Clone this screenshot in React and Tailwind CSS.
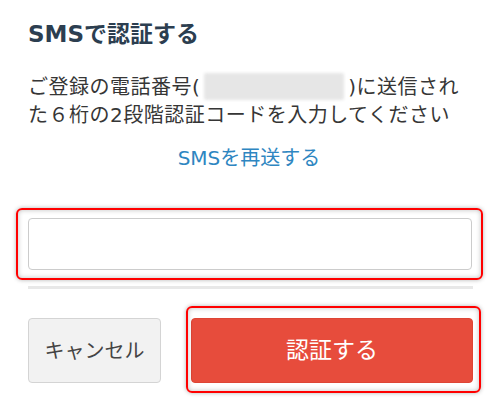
export default function App() {
  const font = { fontFamily: '"DejaVu Sans", "Noto Sans CJK JP", sans-serif' };
  return (
    <div className="w-[498px] h-[413px] bg-white overflow-hidden" style={font}>
      <div className="pl-[28px] w-[473px] flex flex-col">
        <h1 className="mt-[19px] text-[23px] leading-[30px] font-bold text-[#2c3e50]">
          SMSで認証する
        </h1>
        <p className="mt-[24px] text-[20px] leading-[28px] tracking-[0.5px] text-[#363636] whitespace-nowrap">
          ご登録の電話番号(
          <span className="inline-block align-middle w-[140px] h-[27px] mx-[4px] -mt-[4px] bg-[#e6e6e6] blur-[1.5px] rounded-[2px]"></span>
          )に送信され
          <br />
          た６桁の2段階認証コードを入力してください
        </p>
        <div className="mt-[15px] text-center text-[20px] leading-[28px] text-[#2e86c1] pr-[3px]">
          SMSを再送する
        </div>
        <div className="relative mt-[46px]">
          <input
            type="text"
            className="block w-[444px] h-[52px] bg-white border border-[#cccccc] rounded-[4px] outline-none"
          />
          <div className="absolute -left-[12px] -right-[10px] -top-[10px] -bottom-[10px] border-2 border-[#ff0000] rounded-[6px] shadow-[0_0_4px_rgba(0,0,0,0.3),inset_0_0_5px_rgba(0,0,0,0.25)] pointer-events-none"></div>
        </div>
        <div className="mt-[16px] w-[445px] h-[3px] bg-[#e8e8e8]"></div>
        <div className="mt-[29px] flex gap-[30px]">
          <button className="w-[133px] h-[65px] bg-[#f2f2f2] border border-[#d4d4d4] rounded-[4px] text-[20px] text-[#444444] flex items-center justify-center">
            キャンセル
          </button>
          <div className="relative">
            <button className="w-[282px] h-[65px] bg-[#e74c3c] border border-[#de4535] rounded-[4px] text-[23px] text-white flex items-center justify-center">
              認証する
            </button>
            <div className="absolute -left-[5px] -right-[8px] -top-[12px] -bottom-[10px] border-2 border-[#ff0000] rounded-[6px] shadow-[0_0_4px_rgba(0,0,0,0.3),inset_0_0_5px_rgba(0,0,0,0.25)] pointer-events-none"></div>
          </div>
        </div>
      </div>
    </div>
  );
}
